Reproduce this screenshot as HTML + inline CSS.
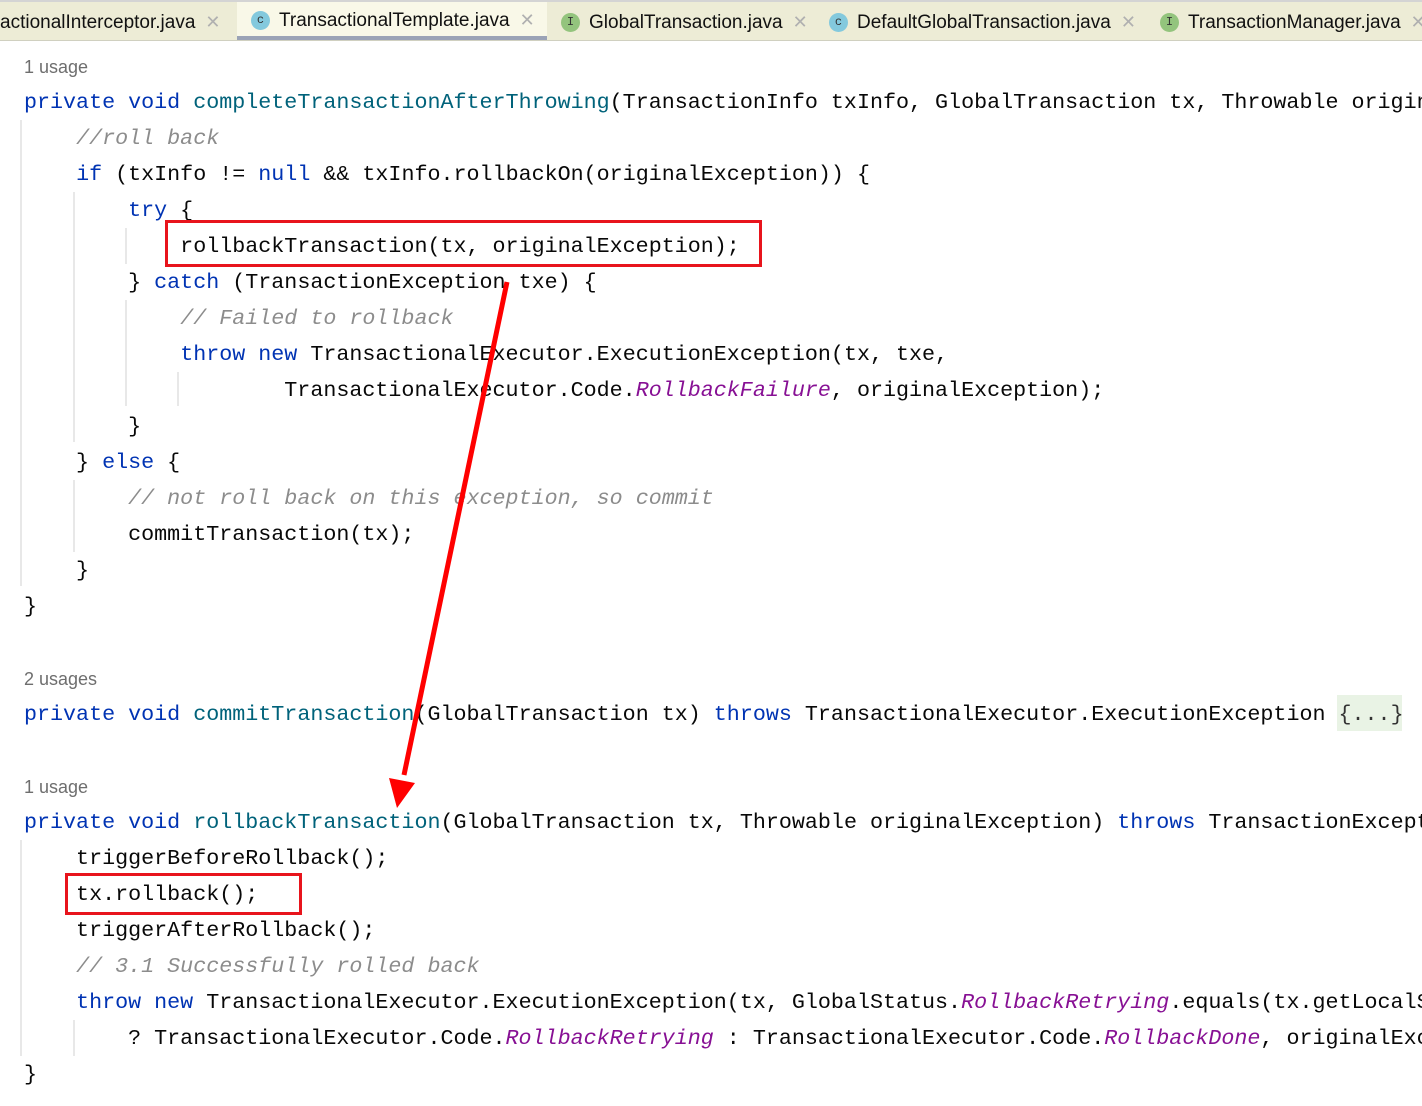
<!DOCTYPE html>
<html><head><meta charset="utf-8"><style>
body{margin:0;width:1422px;height:1106px;background:#fff;position:relative;overflow:hidden;font-family:"Liberation Mono","DejaVu Sans Mono",monospace;}
.tabs{position:absolute;left:0;top:0;width:1422px;height:41px;background:#edecd6;border-top:2px solid #d4d4d4;border-bottom:1px solid #d0d0c0;box-sizing:border-box;font-family:"Liberation Sans",sans-serif;font-size:19px;color:#111;}
.tab{position:absolute;top:0;height:38px;padding-top:3px;box-sizing:border-box;display:flex;align-items:center;white-space:nowrap;}
.tab .ic{display:block;width:19px;height:19px;border-radius:50%;font-size:12px;line-height:19px;text-align:center;margin-right:9px;color:#333;font-family:"Liberation Mono",monospace}
.c{background:#83c9dd}.i{background:#93c47d}
.x{color:#b0b0b0;margin-left:10px;font-size:18px}
.act{background:#f9f8e8;border-bottom:4px solid #9ba3b6;height:38px}
.l{position:absolute;left:24px;font-size:21.7px;white-space:pre;color:#080808;line-height:36px;height:36px}
.u{position:absolute;left:24px;font-family:"Liberation Sans",sans-serif;font-size:18px;color:#6e6e6e}
.k{color:#0033b3}.m{color:#00627a}.cm{color:#8c8c8c;font-style:italic}.p{color:#871094;font-style:italic}
.g{position:absolute;width:2px;background:#e8e8e8}
.box{position:absolute;border:3px solid #e8141c;box-sizing:border-box}
</style></head><body>
<div class="tabs">
<div class="tab" style="left:0">actionalInterceptor.java<span class="x">✕</span></div>
<div class="tab act" style="left:237px;width:310px;padding-left:14px"><span class="ic c">c</span>TransactionalTemplate.java<span class="x">✕</span></div>
<div class="tab" style="left:561px"><span class="ic i">I</span>GlobalTransaction.java<span class="x">✕</span></div>
<div class="tab" style="left:829px"><span class="ic c">c</span>DefaultGlobalTransaction.java<span class="x">✕</span></div>
<div class="tab" style="left:1160px"><span class="ic i">I</span>TransactionManager.java<span class="x">✕</span></div>
</div>

<div class="g" style="left:20px;top:120px;height:466px"></div>
<div class="g" style="left:73px;top:192px;height:250px"></div>
<div class="g" style="left:125px;top:228px;height:36px"></div>
<div class="g" style="left:125px;top:300px;height:106px"></div>
<div class="g" style="left:177px;top:372px;height:34px"></div>
<div class="g" style="left:73px;top:480px;height:72px"></div>
<div class="g" style="left:20px;top:840px;height:216px"></div>
<div class="g" style="left:73px;top:1020px;height:36px"></div>

<div class="u" style="top:57px">1 usage</div>
<div class="l" style="top:85px"><span class="k">private void </span><span class="m">completeTransactionAfterThrowing</span>(TransactionInfo txInfo, GlobalTransaction tx, Throwable origin</div>
<div class="l" style="top:121px">    <span class="cm">//roll back</span></div>
<div class="l" style="top:157px">    <span class="k">if</span> (txInfo != <span class="k">null</span> &amp;&amp; txInfo.rollbackOn(originalException)) {</div>
<div class="l" style="top:193px">        <span class="k">try</span> {</div>
<div class="l" style="top:229px">            rollbackTransaction(tx, originalException);</div>
<div class="l" style="top:265px">        } <span class="k">catch</span> (TransactionException txe) {</div>
<div class="l" style="top:301px">            <span class="cm">// Failed to rollback</span></div>
<div class="l" style="top:337px">            <span class="k">throw new</span> TransactionalExecutor.ExecutionException(tx, txe,</div>
<div class="l" style="top:373px">                    TransactionalExecutor.Code.<span class="p">RollbackFailure</span>, originalException);</div>
<div class="l" style="top:409px">        }</div>
<div class="l" style="top:445px">    } <span class="k">else</span> {</div>
<div class="l" style="top:481px">        <span class="cm">// not roll back on this exception, so commit</span></div>
<div class="l" style="top:517px">        commitTransaction(tx);</div>
<div class="l" style="top:553px">    }</div>
<div class="l" style="top:589px">}</div>

<div class="u" style="top:669px">2 usages</div>
<div style="position:absolute;left:1337px;top:695px;width:65px;height:36px;background:#e9f3e5"></div>
<div class="l" style="top:697px"><span class="k">private void </span><span class="m">commitTransaction</span>(GlobalTransaction tx) <span class="k">throws</span> TransactionalExecutor.ExecutionException <span style="color:#333">{...}</span></div>

<div class="u" style="top:777px">1 usage</div>
<div class="l" style="top:805px"><span class="k">private void </span><span class="m">rollbackTransaction</span>(GlobalTransaction tx, Throwable originalException) <span class="k">throws</span> TransactionExcept</div>
<div class="l" style="top:841px">    triggerBeforeRollback();</div>
<div class="l" style="top:877px">    tx.rollback();</div>
<div class="l" style="top:913px">    triggerAfterRollback();</div>
<div class="l" style="top:949px">    <span class="cm">// 3.1 Successfully rolled back</span></div>
<div class="l" style="top:985px">    <span class="k">throw new</span> TransactionalExecutor.ExecutionException(tx, GlobalStatus.<span class="p">RollbackRetrying</span>.equals(tx.getLocalS</div>
<div class="l" style="top:1021px">        ? TransactionalExecutor.Code.<span class="p">RollbackRetrying</span> : TransactionalExecutor.Code.<span class="p">RollbackDone</span>, originalExc</div>
<div class="l" style="top:1057px">}</div>

<div class="box" style="left:165px;top:220px;width:597px;height:47px"></div>
<div class="box" style="left:65px;top:873px;width:237px;height:42px"></div>

<svg style="position:absolute;left:0;top:0" width="1422" height="1106">
<line x1="507" y1="282" x2="404" y2="775" stroke="#ff0000" stroke-width="5"/>
<polygon points="389,778 415,783 397,808" fill="#ff0000"/>
</svg>
</body></html>
